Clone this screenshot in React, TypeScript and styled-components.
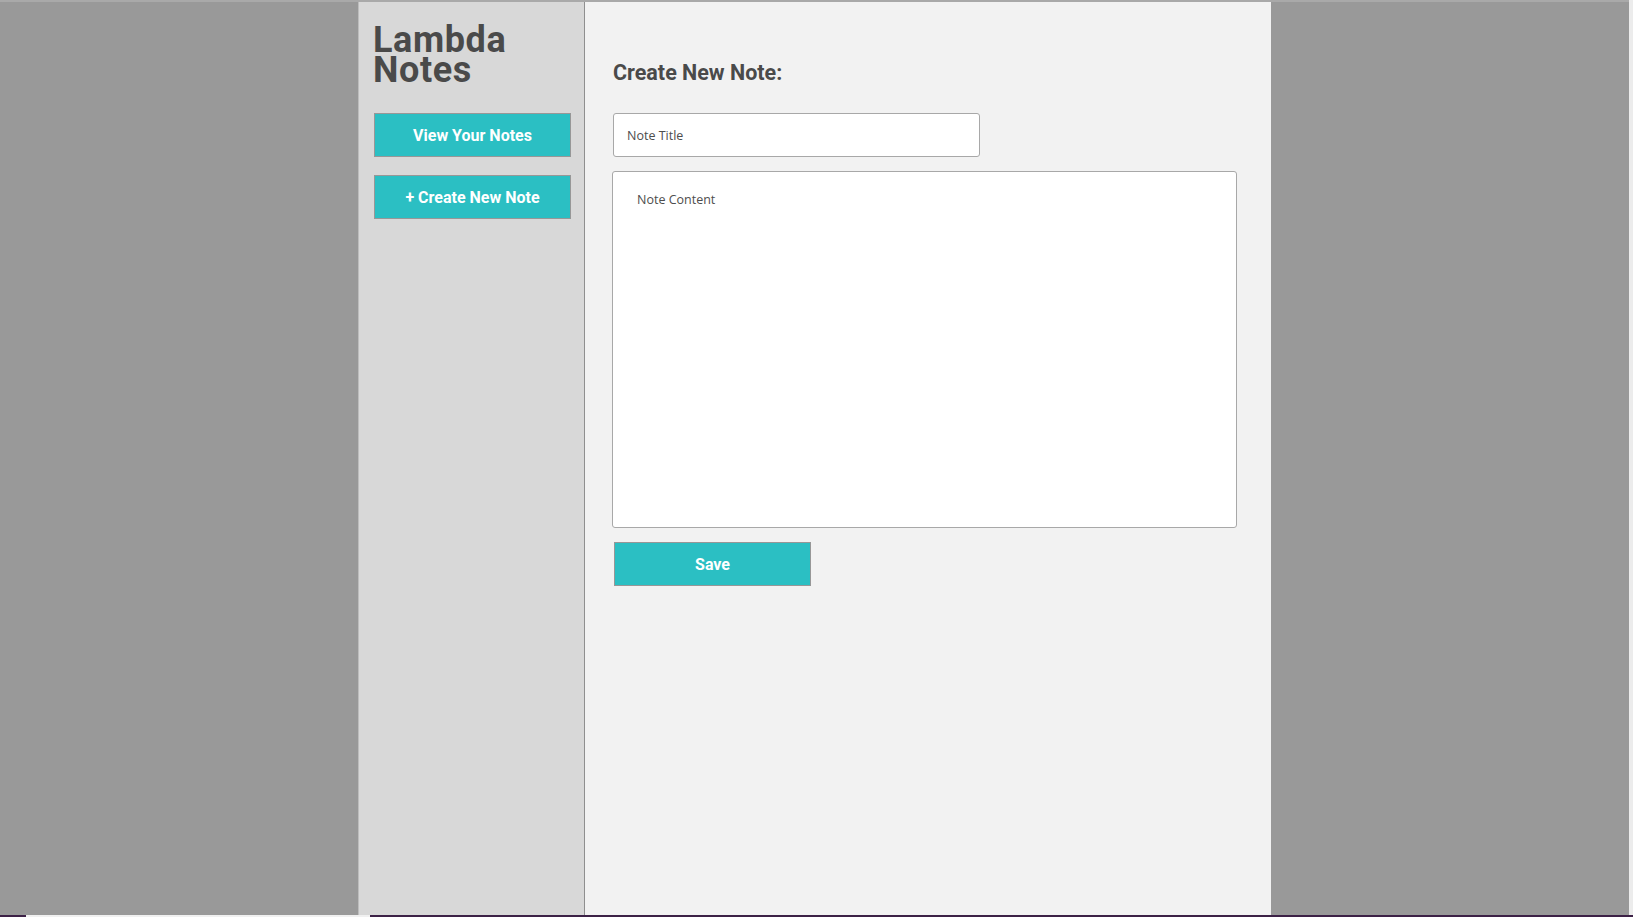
import * as React from 'react';
import styled, {createGlobalStyle} from 'styled-components';

const teal = '#2bbfc3';
const textDark = '#4a4a4a';

const GlobalStyle = createGlobalStyle`
    html, body {
        margin: 0;
        padding: 0;
        height: 100%;
        overflow: hidden;
    }
    body {
        font-family: Roboto, "Liberation Sans", sans-serif;
        background: #f4f4f4;
    }
    #root {
        height: 100%;
    }
`;

const Screen = styled.div`
    display: flex;
    flex-direction: column;
    height: 100vh;
`;

const Desktop = styled.div`
    flex: 1;
    display: flex;
    min-height: 0;
`;

const Backdrop = styled.div`
    flex: 1;
    display: flex;
    justify-content: center;
    background: #999999;
    border-top: 2px solid #a9a9a9;
`;

const RightEdge = styled.div`
    width: 4px;
    background: #ececec;
`;

const Taskbar = styled.div`
    height: 2px;
    display: flex;
    background: #3c2146;
`;

const TaskbarGap = styled.div<{$left: number; $width: number}>`
    margin-left: ${p => p.$left}px;
    width: ${p => p.$width}px;
    background: #f0f0f0;
`;

const Frame = styled.div`
    width: 912px;
    display: flex;
    border-left: 1px solid #bdbdbd;
`;

const Sidebar = styled.nav`
    width: 226px;
    background: #d8d8d8;
    border-right: 1px solid #8f8f8f;
    padding: 23px 0 0 14px;
    box-sizing: border-box;
    display: flex;
    flex-direction: column;
`;

const Logo = styled.h1`
    margin: 0 0 28px 0;
    font-size: 36px;
    line-height: 30px;
    font-weight: 700;
    color: ${textDark};
    letter-spacing: 0.6px;
`;

const NavButton = styled.button`
    width: 197px;
    height: 44px;
    margin: 0 0 18px 1px;
    background: ${teal};
    border: 1px solid #979797;
    color: #ffffff;
    font-family: Roboto, "Liberation Sans", sans-serif;
    font-weight: 700;
    font-size: 16px;
    cursor: pointer;
`;

const Main = styled.main`
    flex: 1;
    background: #f2f2f2;
    padding: 58px 0 0 27px;
    display: flex;
    flex-direction: column;
    align-items: flex-start;
`;

const Heading = styled.h2`
    margin: 0 0 27px 1px;
    font-size: 21.5px;
    font-weight: 700;
    color: ${textDark};
    line-height: 26px;
`;

const TitleInput = styled.input`
    width: 367px;
    height: 44px;
    box-sizing: border-box;
    margin-left: 1px;
    padding: 0 13px;
    border: 1px solid #a8a8a8;
    border-radius: 3px;
    background: #ffffff;
    font-family: "Open Sans", sans-serif;
    font-size: 12.5px;
    color: #333;
    outline: none;
    &::placeholder {
        color: #4d4d4d;
    }
`;

const ContentArea = styled.textarea`
    width: 625px;
    height: 357px;
    box-sizing: border-box;
    margin-top: 14px;
    padding: 19px 24px;
    border: 1px solid #a8a8a8;
    border-radius: 3px;
    background: #ffffff;
    font-family: "Open Sans", sans-serif;
    font-size: 12.5px;
    color: #333;
    resize: none;
    outline: none;
    &::placeholder {
        color: #4d4d4d;
    }
`;

const SaveButton = styled(NavButton)`
    margin: 14px 0 0 2px;
`;

export default function App() {
    return (
        <Screen>
            <GlobalStyle />
            <Desktop>
                <Backdrop>
                    <Frame>
                        <Sidebar>
                            <Logo>Lambda<br />Notes</Logo>
                            <NavButton>View Your Notes</NavButton>
                            <NavButton>+ Create New Note</NavButton>
                        </Sidebar>
                        <Main>
                            <Heading>Create New Note:</Heading>
                            <TitleInput placeholder="Note Title" />
                            <ContentArea placeholder="Note Content" />
                            <SaveButton>Save</SaveButton>
                        </Main>
                    </Frame>
                </Backdrop>
                <RightEdge />
            </Desktop>
            <Taskbar>
                <TaskbarGap $left={26} $width={344} />
            </Taskbar>
        </Screen>
    );
}
